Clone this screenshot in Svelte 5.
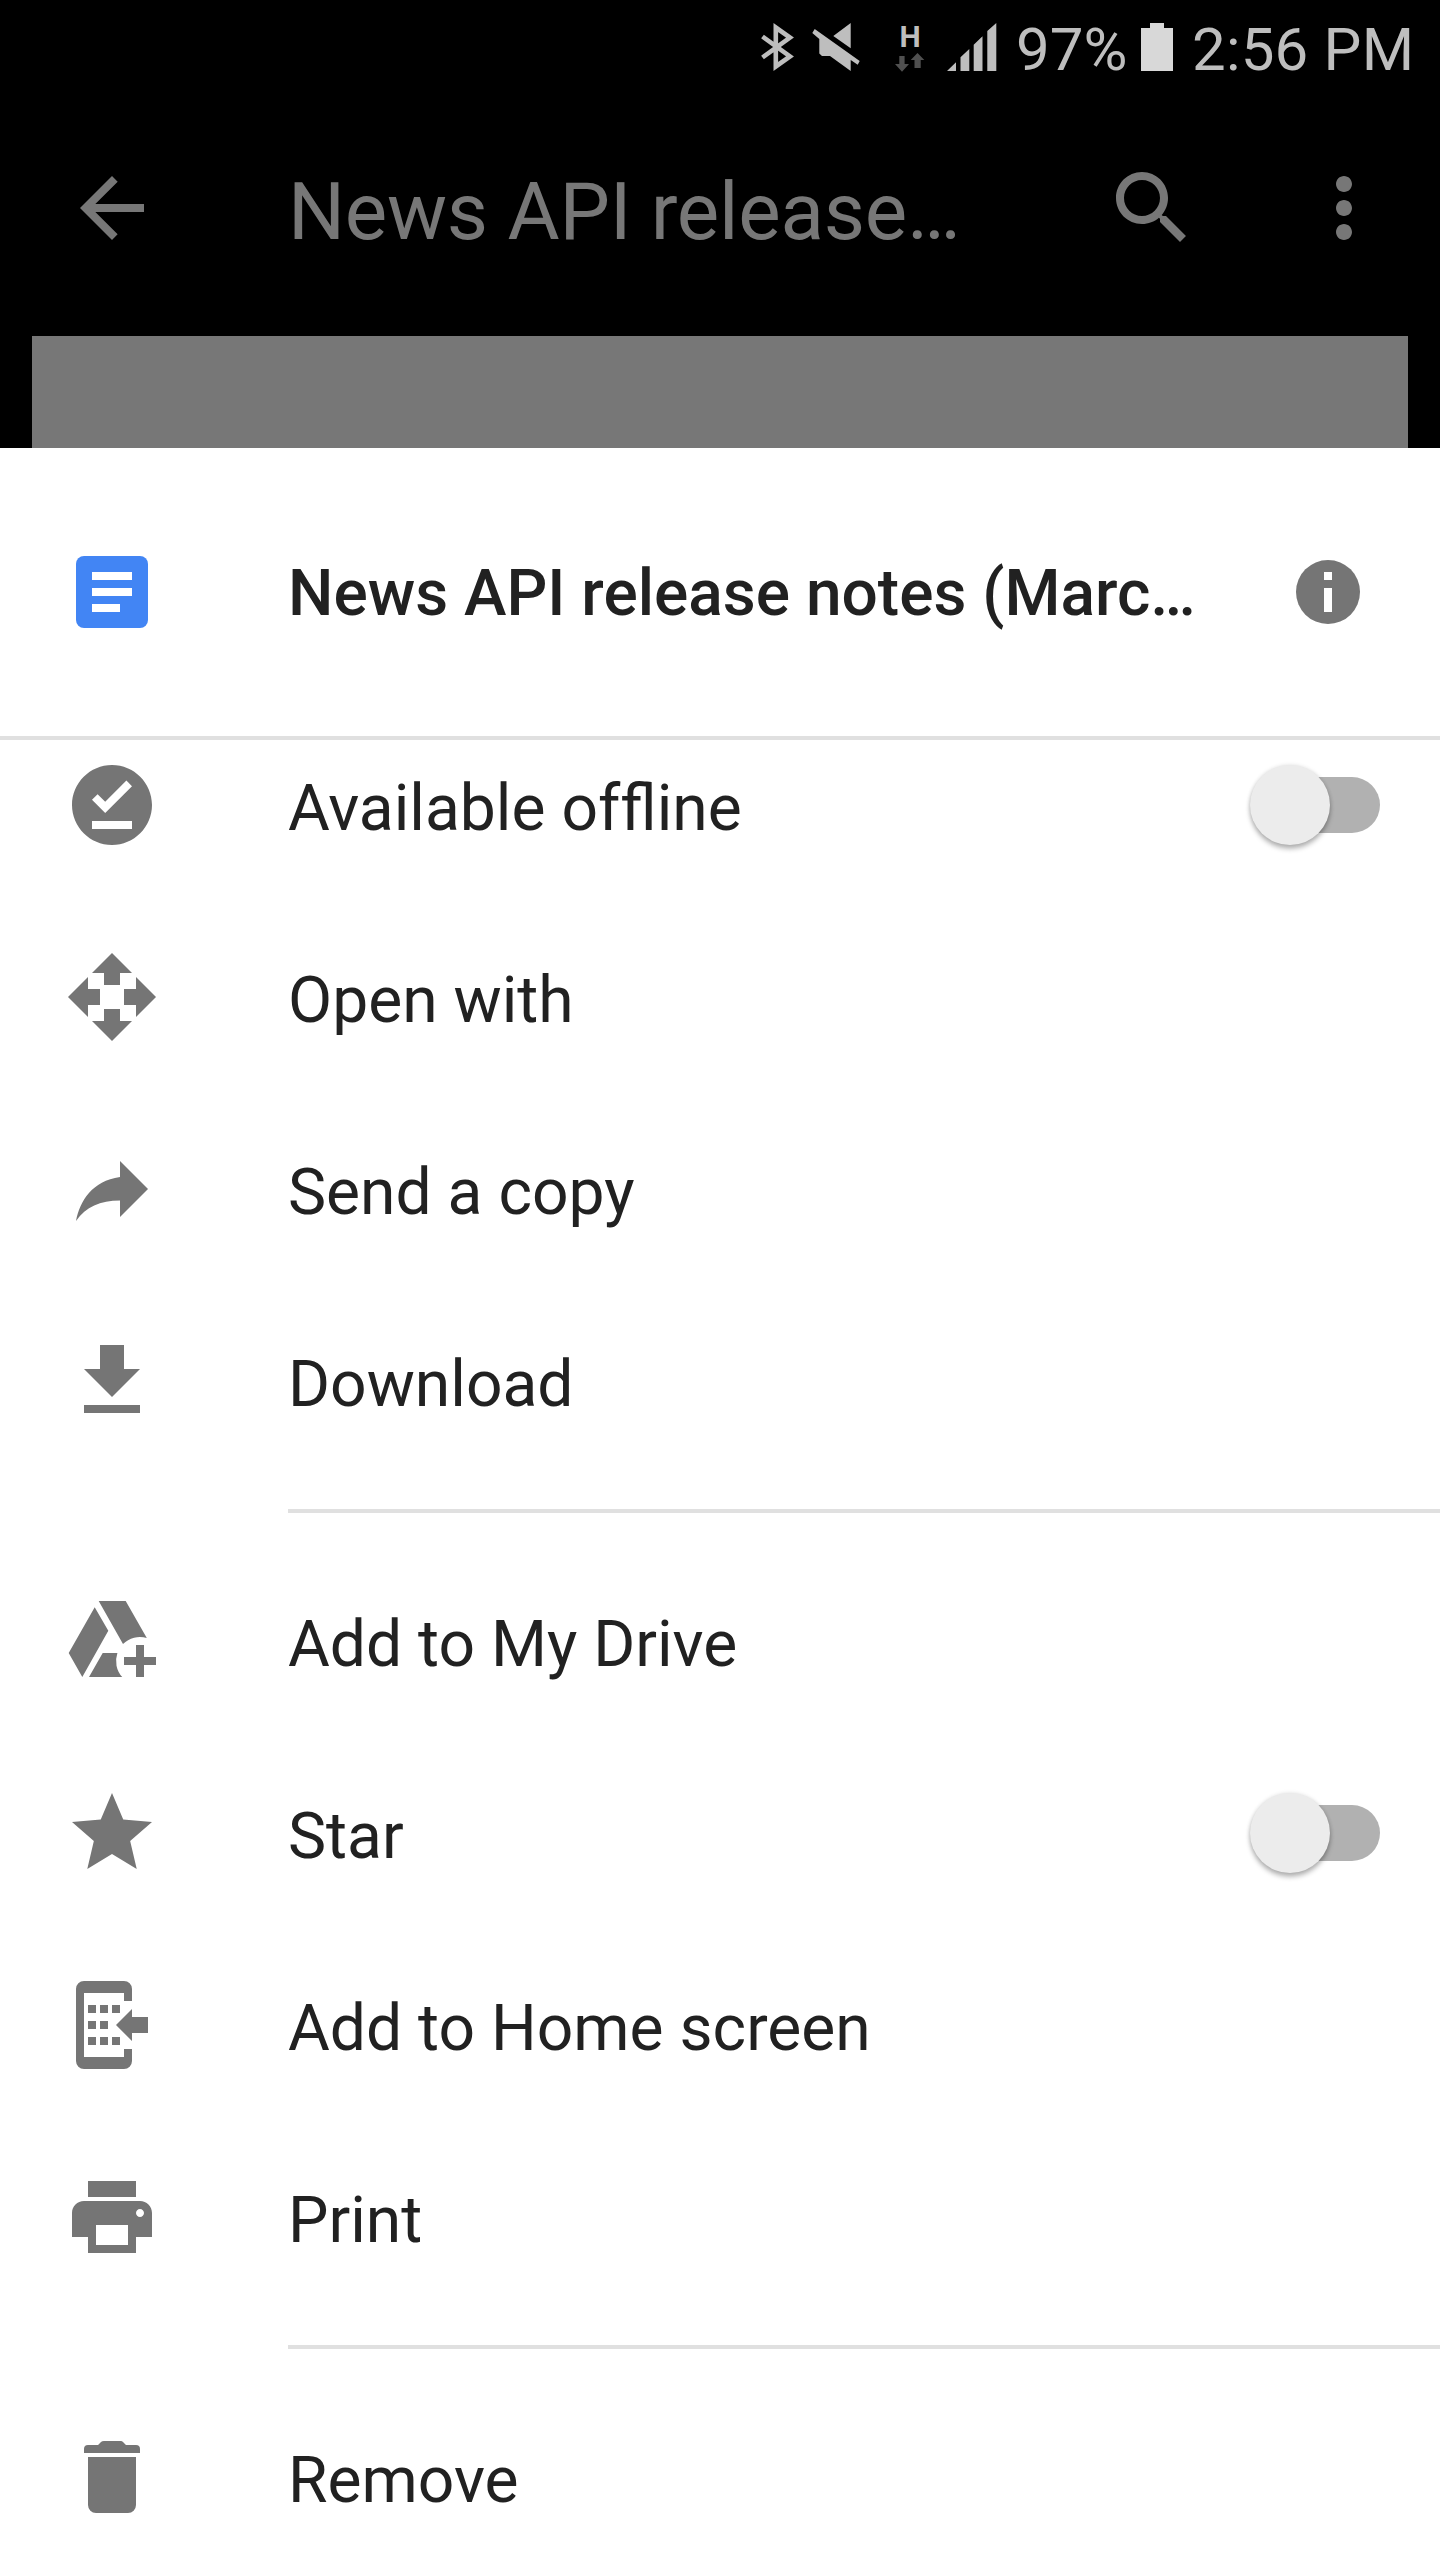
<script lang="ts">
    type Item = { label: string; icon: string; toggle?: boolean }

    // menu groups, a divider is drawn between each of them
    const groups: Item[][] = [
        [
            // \u200c keeps the first f out of the fl ligature
            { label: "Available of\u200cfline", icon: "offline", toggle: true },
            { label: "Open with", icon: "openWith" },
            { label: "Send a copy", icon: "send" },
            { label: "Download", icon: "download" }
        ],
        [
            { label: "Add to My Drive", icon: "drive" },
            { label: "Star", icon: "star", toggle: true },
            { label: "Add to Home screen", icon: "home" },
            { label: "Print", icon: "print" }
        ],
        [
            { label: "Remove", icon: "remove" }
        ]
    ]

    // all paths are drawn on a 96x96 or 24x24 grid
    const icons: Record<string, { size: number; d: string }> = {
        offline: { size: 24, d: "M12 2C6.5 2 2 6.5 2 12s4.5 10 10 10 10-4.5 10-10S17.5 2 12 2zm5 16H7v-2h10v2zm-6.7-4L7 10.7l1.4-1.4 1.9 1.9 5.3-5.3L17 7.3 10.3 14z" },
        openWith: { size: 24, d: "M10 9h4V6h3l-5-5-5 5h3v3zm-1 1H6V7l-5 5 5 5v-3h3v-4zm14 2l-5-5v3h-3v4h3v3l5-5zm-9 3h-4v3H7l5 5 5-5h-3v-3z" },
        send: { size: 24, d: "M14 9V5l7 7-7 7v-4.1c-5 0-8.5 1.6-11 5.1 1-5 4-10 11-11z" },
        download: { size: 24, d: "M19 9h-4V3H9v6H5l7 7 7-7zM5 18v2h14v-2H5z" },
        drive: { size: 96, d: "M30.7 14.3L44.3 37.7 18.3 84 4.7 60zM34.7 8H61.7L82.8 45A24 24 0 0 0 59 51zM38.7 60H53.4A24 24 0 0 0 58.2 84H25zM72 52h8v12h12v8H80v12h-8V72H60v-8h12z" },
        star: { size: 24, d: "M12 17.27L18.18 21l-1.64-7.03L22 9.24l-7.19-.61L12 2 9.19 8.63 2 9.24l5.46 4.73L5.82 21z" },
        home: { size: 96, d: "M20 4H60a8 8 0 0 1 8 8V24H60V16H20V80H60V72H68V84a8 8 0 0 1-8 8H20a8 8 0 0 1-8-8V12a8 8 0 0 1 8-8zM24 28h8v8h-8zM36 28h8v8h-8zM48 28h8v8h-8zM24 44h8v8h-8zM36 44h8v8h-8zM24 60h8v8h-8zM36 60h8v8h-8zM48 60h8v8h-8zM52 48L68 32V40H84V56H68V64z" },
        print: { size: 24, d: "M19 8H5c-1.66 0-3 1.34-3 3v6h4v4h12v-4h4v-6c0-1.66-1.34-3-3-3zm-3 11H8v-5h8v5zm3-7c-.55 0-1-.45-1-1s.45-1 1-1 1 .45 1 1-.45 1-1 1zm-1-9H6v4h12V3z" },
        remove: { size: 96, d: "M24 28H72V76a8 8 0 0 1-8 8H32a8 8 0 0 1-8-8zM20 24V20Q20 16 24 16H34L37 13Q38 12 40 12H57Q58 12 59 13L62 16H72Q76 16 76 20V24z" }
    }

    let checked: Record<string, boolean> = $state({ offline: false, star: false })
</script>

<div class="screen">
    <div class="status">
        <svg class="bluetooth" width="33" height="48" viewBox="0 0 33 48">
            <path d="M1.5 13.5L29 33.5 14.8 43.5V4.5L29 14.5 1.5 34.5" fill="none" stroke="currentColor" stroke-width="4.6" />
        </svg>
        <svg class="mute" width="48" height="48" viewBox="0 0 48 48">
            <path d="M38.7 0V25.3L21.3 13zM2.7 6L47.7 38 45.7 41.7 38.7 37V48L18 33H10L7.3 30.5V16L.3 10z" />
        </svg>
        <div class="network">
            <span>H</span>
            <svg width="30" height="19" viewBox="0 0 30 19">
                <path d="M4.3 3H9.6V11H14L7 18.7 0 11H4.3zM22.5 0L29.3 7H25.7V15H19.5V7H15.7z" />
            </svg>
        </div>
        <svg class="signal" width="50" height="48" viewBox="0 0 50 48">
            <path d="M0 48L9 39.3V48zM13.5 48V34.3L22.3 26V48zM26.7 48V21.7L35.5 13.3V48zM40.3 48V8L49.3 0V48z" />
        </svg>
        <span class="percent">97%</span>
        <svg class="battery" width="32" height="48" viewBox="0 0 32 48">
            <path d="M9 0H23V5H32V48H0V5H9z" />
        </svg>
        <span class="time">2:56 PM</span>
    </div>

    <div class="toolbar">
        <svg class="icon" viewBox="0 0 24 24"><path d="M20 11H7.83l5.59-5.59L12 4l-8 8 8 8 1.41-1.41L7.83 13H20v-2z" /></svg>
        <h1>News API release…</h1>
        <svg class="icon" viewBox="0 0 24 24"><path d="M15.5 14h-.79l-.28-.27C15.41 12.59 16 11.11 16 9.5 16 5.91 13.09 3 9.5 3S3 5.91 3 9.5 5.91 16 9.5 16c1.61 0 3.09-.59 4.23-1.57l.27.28v.79l5 4.99L20.49 19l-4.99-5zm-6 0C7.01 14 5 11.99 5 9.5S7.01 5 9.5 5 14 7.01 14 9.5 11.99 14 9.5 14z" /></svg>
        <svg class="icon more" viewBox="0 0 24 24"><path d="M12 8c1.1 0 2-.9 2-2s-.9-2-2-2-2 .9-2 2 .9 2 2 2zm0 2c-1.1 0-2 .9-2 2s.9 2 2 2 2-.9 2-2-.9-2-2-2zm0 6c-1.1 0-2 .9-2 2s.9 2 2 2 2-.9 2-2-.9-2-2-2z" /></svg>
    </div>

    <div class="page"></div>

    <div class="sheet">
        <div class="header">
            <svg class="icon" viewBox="0 0 96 96">
                <rect x="12" y="12" width="72" height="72" rx="8" fill="#4285f4" />
                <path d="M28 28H68V36H28zM28 44H68V52H28zM28 60H56V68H28z" fill="#fff" />
            </svg>
            <h2>News API release notes (Marc…</h2>
            <svg class="info" viewBox="0 0 64 64">
                <circle cx="32" cy="32" r="32" />
                <path d="M28 12H36V20H28zM28 28H36V52H28z" fill="#fff" />
            </svg>
        </div>

        <div class="scroller">
            <div class="list">
                {#each groups as group}
                    <div class="group">
                        {#each group as item}
                            <div class="row">
                                <svg class="icon" viewBox="0 0 {icons[item.icon].size} {icons[item.icon].size}">
                                    <path d={icons[item.icon].d} />
                                </svg>
                                <span class="label">{item.label}</span>
                                {#if item.toggle}
                                    <button
                                        class="switch"
                                        class:on={checked[item.icon]}
                                        aria-label={item.label}
                                        onclick={() => checked[item.icon] = !checked[item.icon]}
                                    ></button>
                                {/if}
                            </div>
                        {/each}
                    </div>
                {/each}
            </div>
        </div>
    </div>
</div>

<style>
    :global(body) {
        margin: 0;
        background: #000;
    }
    .screen {
        display: flex;
        flex-direction: column;
        width: 1440px;
        height: 2560px;
        overflow: hidden;
        background: #000;
        font-family: Roboto, "Noto Sans", sans-serif;
    }
    svg {
        display: block;
        flex: none;
        fill: currentColor;
    }
    .icon {
        width: 96px;
        height: 96px;
    }

    /* status bar */
    .status {
        display: flex;
        align-items: flex-start;
        box-sizing: border-box;
        height: 96px;
        padding: 23px 0 0 761px;
        color: #bebebe;
        font-size: 60px;
        line-height: 48px;
        white-space: nowrap;
    }
    .bluetooth {
        margin-right: 18px;
    }
    .mute {
        margin-right: 35px;
    }
    .network {
        width: 30px;
        margin-right: 22px;
    }
    .network span {
        display: block;
        height: 30px;
        font-size: 30px;
        font-weight: 700;
        line-height: 28px;
        text-align: center;
    }
    .network svg {
        color: #505050;
        margin-top: 0;
    }
    .percent {
        width: 128px;
        margin-left: 19px;
        padding-top: 3px;
    }
    .status .battery {
        margin-left: -3px;
        color: #d8d8d8;
    }
    .time {
        margin-left: 19px;
        padding-top: 3px;
        letter-spacing: 0.2px;
    }

    /* dimmed app behind the sheet */
    .toolbar {
        display: flex;
        align-items: center;
        height: 224px;
        padding: 0 48px 0 64px;
        color: #777;
    }
    h1 {
        flex: 1;
        margin: 0 0 0 128px;
        padding-top: 8px;
        font-size: 80px;
        font-weight: 400;
        line-height: 96px;
        letter-spacing: -0.25px;
        white-space: nowrap;
    }
    .more {
        margin-left: 96px;
    }
    .page {
        height: 112px;
        margin: 16px 32px 0;
        background: #777;
    }

    /* bottom sheet */
    .sheet {
        display: flex;
        flex: 1;
        flex-direction: column;
        min-height: 0;
        background: #fff;
        color: #757575;
    }
    .header {
        display: flex;
        align-items: center;
        height: 288px;
        padding: 0 80px 0 64px;
        border-bottom: 4px solid #e0e0e0;
    }
    h2 {
        flex: 1;
        margin: 0 0 0 128px;
        padding-top: 2px;
        color: #212121;
        font-size: 64px;
        font-weight: 500;
        white-space: nowrap;
    }
    .info {
        width: 64px;
        height: 64px;
    }
    .scroller {
        flex: 1;
        min-height: 0;
        overflow: hidden;
    }
    .list {
        margin-top: -31px;
    }
    .group + .group {
        position: relative;
        margin-top: 32px;
        padding-top: 36px;
    }
    .group + .group::before {
        content: "";
        position: absolute;
        top: 0;
        right: 0;
        left: 288px;
        height: 4px;
        background: #e0e0e0;
    }
    .row {
        display: flex;
        align-items: center;
        height: 192px;
        padding: 0 60px 0 64px;
    }
    .label {
        flex: 1;
        margin-left: 128px;
        padding-top: 6px;
        color: #212121;
        font-size: 64.15px;
        line-height: 75px;
        white-space: nowrap;
    }
    .switch {
        position: relative;
        width: 118px;
        height: 56px;
        padding: 0;
        border: none;
        border-radius: 28px;
        background: #b1b1b1;
    }
    .switch::before {
        content: "";
        position: absolute;
        top: -12px;
        left: -12px;
        width: 80px;
        height: 80px;
        border-radius: 50%;
        background: #ececec;
        box-shadow: 0 4px 5px rgba(0, 0, 0, 0.28), 0 0 4px rgba(0, 0, 0, 0.12);
    }
    .switch.on::before {
        left: 50px;
    }
</style>
